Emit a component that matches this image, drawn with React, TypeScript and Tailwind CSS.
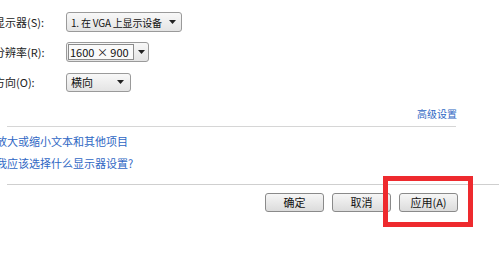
import { ReactNode } from "react";

const font = { fontFamily: '"Noto Sans CJK SC", "Liberation Sans", sans-serif' };

function Arrow() {
  return (
    <svg width="7" height="4" viewBox="0 0 7 4" className="shrink-0">
      <path d="M0 0 L7 0 L3.5 4 Z" fill="#222" />
    </svg>
  );
}

function Row({ label, children }: { label: string; children: ReactNode }) {
  return (
    <div className="flex items-center h-[20px]">
      <span className="w-[72px] shrink-0 text-[11px] text-[#222] whitespace-nowrap">{label}</span>
      {children}
    </div>
  );
}

function Btn({ children }: { children: ReactNode }) {
  return (
    <button className="w-[59px] h-[19px] rounded-[3px] border border-[#8a8a8a] bg-gradient-to-b from-[#f6f6f6] to-[#dcdcdc] text-[11px] leading-none text-[#111] flex items-center justify-center">
      {children}
    </button>
  );
}

export default function App() {
  return (
    <div className="w-[499px] h-[263px] bg-white overflow-hidden relative" style={font}>
      <div className="pt-[12px] -ml-[6px] flex flex-col gap-[10px]">
        <Row label="显示器(S):">
          <div className="w-[116px] h-[20px] rounded-[3px] border border-[#9a9a9a] bg-gradient-to-b from-[#f8f8f8] to-[#e4e4e4] flex items-center justify-between pl-[4px] pr-[5px]">
            <span className="text-[10px] text-[#111] whitespace-nowrap tracking-[-0.2px]">1. 在 VGA 上显示设备</span>
            <Arrow />
          </div>
        </Row>
        <Row label="分辨率(R):">
          <div className="w-[83px] h-[20px] rounded-[3px] border border-[#9a9a9a] bg-gradient-to-b from-[#f8f8f8] to-[#e4e4e4] flex items-center">
            <div className="w-[66px] h-[16px] ml-[1px] border border-[#8c8c8c] bg-[#fafafa] flex items-center pl-[1px]">
              <span className="text-[11px] text-[#111] whitespace-nowrap">1600 × 900</span>
            </div>
            <div className="flex-1 flex justify-center">
              <Arrow />
            </div>
          </div>
        </Row>
        <Row label="方向(O):">
          <div className="w-[65px] h-[19px] rounded-[3px] border border-[#9a9a9a] bg-gradient-to-b from-[#f8f8f8] to-[#e4e4e4] flex items-center justify-between pl-[4px] pr-[6px]">
            <span className="text-[11px] text-[#111]">横向</span>
            <Arrow />
          </div>
        </Row>
      </div>

      <div className="w-[457px] flex justify-end mt-[14px]">
        <span className="text-[10px] text-[#2f67c4]">高级设置</span>
      </div>
      <div className="ml-[7px] w-[449px] h-px bg-[#d6d6d6] mt-[5px]" />

      <div className="-ml-[4px] mt-[7px] flex flex-col gap-[7px]">
        <span className="text-[11px] leading-[15px] text-[#2f67c4] whitespace-nowrap">放大或缩小文本和其他项目</span>
        <span className="text-[11px] leading-[15px] text-[#2f67c4] whitespace-nowrap">我应该选择什么显示器设置?</span>
      </div>

      <div className="ml-[7px] h-px bg-[#cfcfcf] mt-[13px]" />

      <div className="flex gap-[8px] pl-[265px] mt-[8px]">
        <Btn>确定</Btn>
        <Btn>取消</Btn>
        <Btn>应用(A)</Btn>
      </div>

      <div className="absolute left-[383px] top-[176px] w-[90px] h-[51px] border-[5px] border-[#ee2a2e]" />
    </div>
  );
}
